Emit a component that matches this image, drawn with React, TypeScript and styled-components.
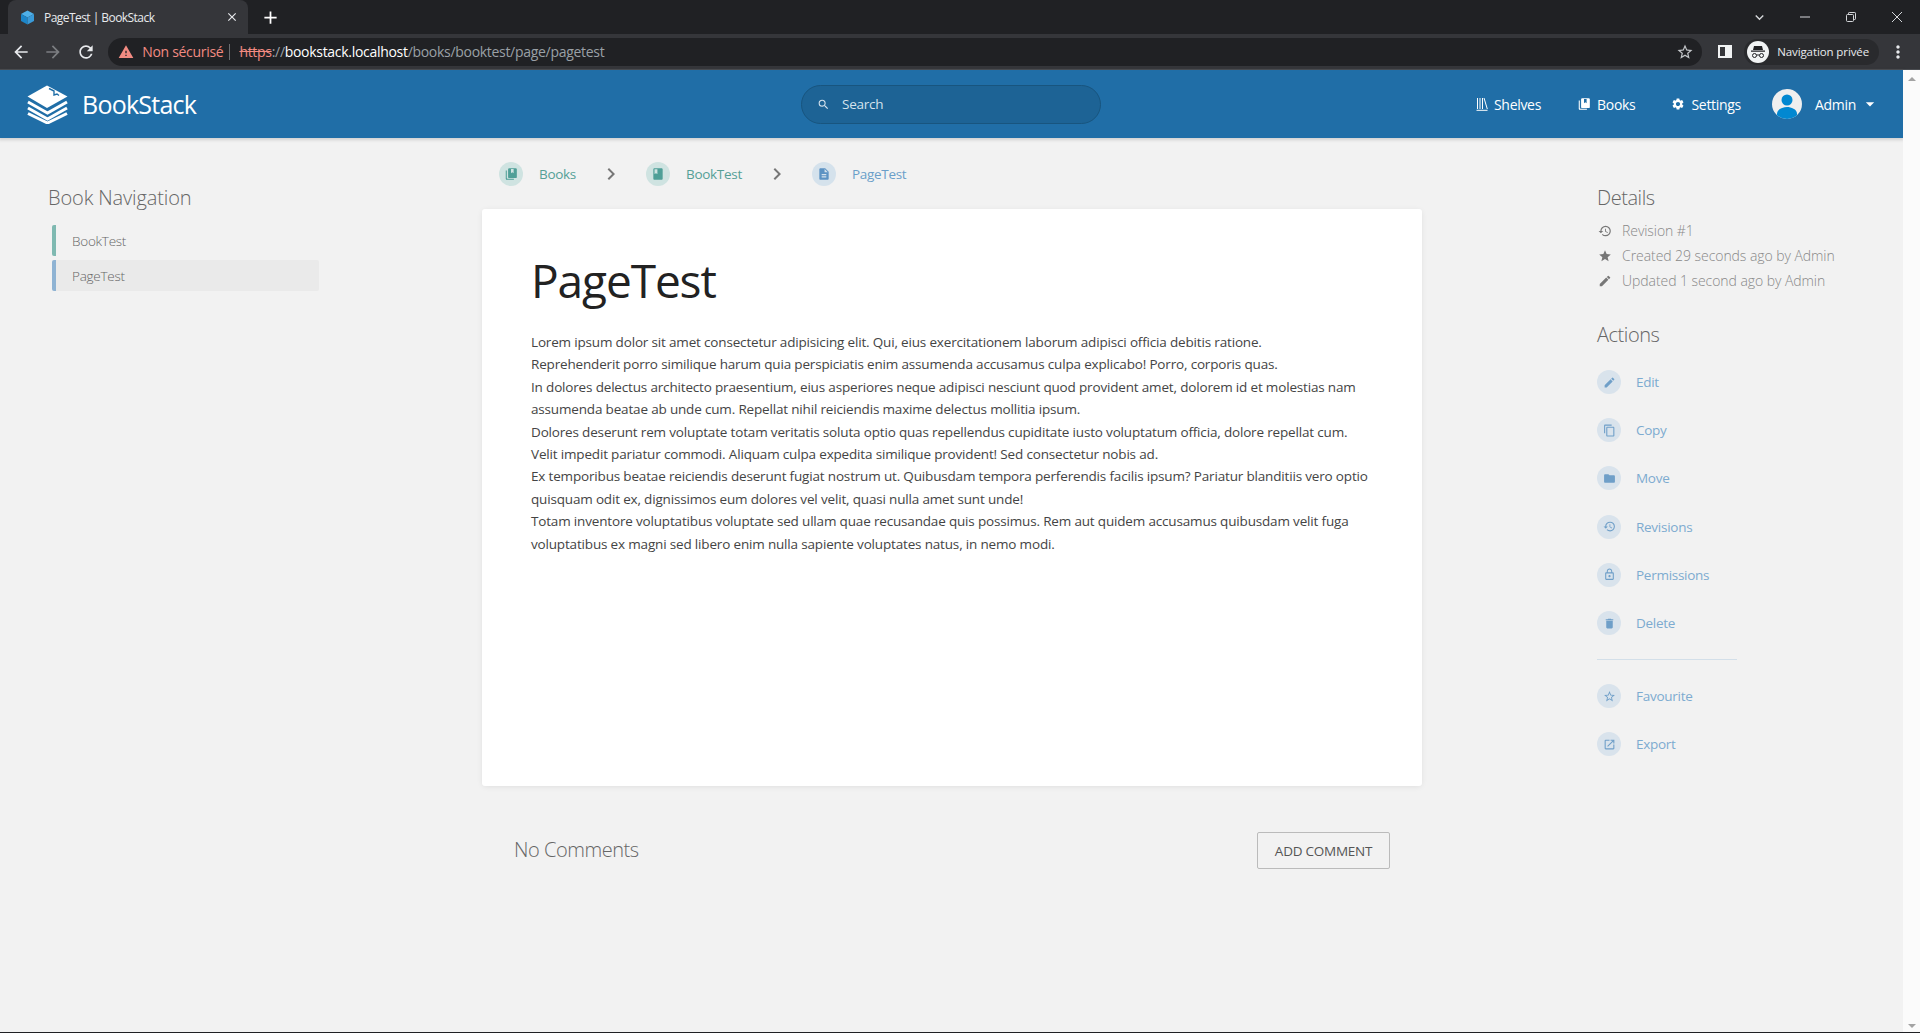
import React from 'react';
import styled, { createGlobalStyle } from 'styled-components';
import {
  MdArrowBack,
  MdArrowForward,
  MdRefresh,
  MdWarning,
  MdStarBorder,
  MdMoreVert,
  MdClose,
  MdAdd,
  MdKeyboardArrowDown,
  MdSearch,
  MdSettings,
  MdArrowDropDown,
  MdChevronRight,
  MdBook,
  MdDescription,
  MdHistory,
  MdStar,
  MdEdit,
  MdContentCopy,
  MdFolder,
  MdLockOutline,
  MdDelete,
  MdOutlineOpenInNew,
} from 'react-icons/md';

const FONT = '"Open Sans", "Noto Sans", "Liberation Sans", sans-serif';

const GlobalStyle = createGlobalStyle`
  html, body {
    margin: 0;
    height: 100%;
    overflow: hidden;
    background: #f2f2f2;
    font-family: ${FONT};
  }
  * { box-sizing: border-box; }
`;

const Window = styled.div`
  width: 1920px;
  height: 1033px;
  display: flex;
  flex-direction: column;
  border-bottom: 1px solid #202124;
`;

/* browser chrome */
const TabStrip = styled.div`
  height: 34px;
  background: #202124;
  display: flex;
  align-items: flex-end;
  padding-left: 8px;
  color: #fff;
`;

const Tab = styled.div`
  width: 240px;
  height: 34px;
  background: #35363a;
  border-radius: 8px 8px 0 0;
  display: flex;
  align-items: center;
  padding: 0 9px 0 12px;
  font-size: 12px;
  letter-spacing: -0.55px;
  color: #e8eaed;
  gap: 9px;
`;

const TabTitle = styled.span`
  flex: 1;
`;

const NewTab = styled.div`
  width: 44px;
  height: 34px;
  display: flex;
  align-items: center;
  justify-content: center;
  font-size: 21px;
`;

const WindowControls = styled.div`
  margin-left: auto;
  height: 34px;
  display: flex;
  align-items: center;
  color: #d5d7da;
`;

const WindowButton = styled.div`
  width: 46px;
  height: 28px;
  display: flex;
  align-items: center;
  justify-content: center;
`;

const Toolbar = styled.div`
  height: 36px;
  background: #35363a;
  display: flex;
  align-items: center;
  padding: 0 0 0 11px;
  color: #e8eaed;
  border-bottom: 1px solid #4a4c50;
`;

const NavArrow = styled.div<{ $dim?: boolean }>`
  width: 32.4px;
  height: 28px;
  display: flex;
  align-items: center;
  justify-content: flex-start;
  font-size: 20px;
  color: ${(p) => (p.$dim ? '#7c7e82' : '#e8eaed')};
`;

const AddressBar = styled.div`
  width: 1594px;
  height: 28px;
  border-radius: 14px;
  background: #202124;
  display: flex;
  align-items: center;
  padding: 0 8px 0 10px;
  font-size: 14px;
  letter-spacing: -0.3px;
`;

const NotSecure = styled.span`
  display: flex;
  align-items: center;
  gap: 8px;
  color: #f28b82;
  padding-right: 6px;
  border-right: 1px solid #6b6d70;
  margin-right: 9px;
  line-height: 16px;
`;

const Scheme = styled.span`
  color: #f28b82;
  text-decoration: line-through;
`;

const UrlMuted = styled.span`
  color: #9aa0a6;
`;

const UrlHost = styled.span`
  color: #fff;
`;

const BarStar = styled.div`
  margin-left: auto;
  display: flex;
  font-size: 18px;
  color: #c4c7ca;
`;

const SidePanel = styled.div`
  width: 14px;
  height: 13px;
  margin: 0 12px 0 16px;
  border: 2px solid #f1f3f4;
  border-right-width: 7px;
`;

const Incognito = styled.div`
  display: flex;
  align-items: center;
  gap: 8px;
  height: 26px;
  width: 135px;
  border-radius: 13px;
  background: #292a2d;
  padding-left: 3px;
  font-size: 11.5px;
  letter-spacing: -0.1px;
  color: #e8eaed;
`;

const IncognitoBadge = styled.div`
  width: 22px;
  height: 22px;
  border-radius: 50%;
  background: #f1f3f4;
  display: flex;
  align-items: center;
  justify-content: center;
`;

const MoreButton = styled.div`
  display: flex;
  font-size: 20px;
  margin-left: 9px;
`;

/* page */
const Viewport = styled.div`
  flex: 1;
  display: flex;
  min-height: 0;
`;

const Page = styled.div`
  flex: 1;
  display: flex;
  flex-direction: column;
`;

const Scrollbar = styled.div`
  width: 17px;
  display: flex;
  flex-direction: column;
  justify-content: space-between;
  align-items: center;
  padding: 7px 0 4px;
  background: #fbfbfb;
`;

const ScrollArrow = styled.div<{ $down?: boolean }>`
  width: 0;
  height: 0;
  border-left: 4px solid transparent;
  border-right: 4px solid transparent;
  ${(p) =>
    p.$down
      ? 'border-top: 4px solid #a3a3a3;'
      : 'border-bottom: 4px solid #a3a3a3;'}
`;

const Header = styled.header`
  height: 68px;
  background: #206ea7;
  color: #fff;
  display: grid;
  grid-template-columns: 1fr 300px 1fr;
  align-items: center;
  padding: 0 28px 0 27px;
  box-shadow: 0 1px 3px 1px rgba(76, 76, 76, 0.2);
`;

const Brand = styled.div`
  display: flex;
  align-items: center;
  gap: 14px;
  font-size: 25px;
  letter-spacing: -0.75px;
`;

const SearchBox = styled.div`
  height: 39px;
  border-radius: 20px;
  background: #1d6395;
  border: 1px solid #18557f;
  display: flex;
  align-items: center;
  gap: 12px;
  padding-left: 15px;
  font-size: 13.5px;
  letter-spacing: -0.25px;
  color: #d4e2ed;
`;

const SearchIcon = styled(MdSearch)`
  font-size: 13px;
`;

const Links = styled.nav`
  display: flex;
  justify-content: flex-end;
  align-items: center;
  font-size: 14px;
  letter-spacing: -0.3px;
`;

const NavLink = styled.a`
  display: flex;
  align-items: center;
  gap: 6px;
  margin-left: 36px;
`;

const Avatar = styled.div`
  width: 30px;
  height: 30px;
  margin-left: 31px;
  border-radius: 50%;
  background: #efefef;
  overflow: hidden;
`;

const UserName = styled.span`
  margin-left: 13px;
`;

const Caret = styled(MdArrowDropDown)`
  font-size: 20px;
  margin: 0 -5px 0 4px;
`;

const Columns = styled.main`
  flex: 1;
  display: grid;
  grid-template-columns: 482px 940px 1fr;
`;

const LeftColumn = styled.aside`
  padding: 46px 0 0 48px;
`;

const CenterColumn = styled.div`
  display: flex;
  flex-direction: column;
`;

const RightColumn = styled.aside`
  padding: 46px 0 0 175px;
`;

const SideTitle = styled.h5`
  margin: 0;
  font-size: 20px;
  line-height: 27px;
  font-weight: 300;
  letter-spacing: -0.45px;
  color: #666;
`;

const BookNavTitle = styled(SideTitle)`
  letter-spacing: -0.12px;
`;

const BookNav = styled.ul`
  list-style: none;
  margin: 14px 0 0 4px;
  padding: 0;
  display: flex;
  flex-direction: column;
  gap: 4px;
  width: 267px;
`;

const BookNavItem = styled.li<{ $accent: string; $active?: boolean }>`
  height: 31px;
  display: flex;
  align-items: center;
  padding-left: 16px;
  border-left: 4px solid ${(p) => p.$accent};
  border-radius: 2px;
  background: ${(p) => (p.$active ? '#eaeaea' : 'transparent')};
  font-size: 13.5px;
  font-weight: 300;
  letter-spacing: -0.25px;
  color: #666;
`;

const Breadcrumbs = styled.div`
  height: 71px;
  display: flex;
  align-items: center;
  padding-left: 17px;
`;

const Crumb = styled.a<{ $color: string }>`
  display: flex;
  align-items: center;
  gap: 16px;
  font-size: 13.5px;
  letter-spacing: -0.3px;
  color: ${(p) => p.$color};
`;

const CrumbIcon = styled.span<{ $color: string; $bg: string }>`
  width: 24px;
  height: 24px;
  border-radius: 50%;
  display: flex;
  align-items: center;
  justify-content: center;
  font-size: 14px;
  color: ${(p) => p.$color};
  background: ${(p) => p.$bg};
`;

const CrumbSep = styled(MdChevronRight)`
  font-size: 24px;
  color: #777;
  margin: 0 23px;
`;

const Card = styled.article`
  height: 577px;
  background: #fff;
  border-radius: 3px;
  box-shadow: 0 1px 6px -1px rgba(0, 0, 0, 0.1);
  padding: 43px 50px 0 49px;
`;

const PageTitle = styled.h1`
  margin: 0;
  font-size: 46px;
  line-height: 56px;
  font-weight: 400;
  letter-spacing: -1.1px;
  color: #222;
`;

const BodyText = styled.p`
  margin: 23px 0 0;
  font-size: 13.5px;
  line-height: 22.4px;
  letter-spacing: -0.17px;
  color: #444;
  white-space: nowrap;
`;

const Comments = styled.section`
  display: flex;
  justify-content: space-between;
  align-items: flex-start;
  margin-top: 46px;
  padding: 0 32px;
`;

const CommentsTitle = styled.h5`
  margin: 4px 0 0;
  font-size: 20px;
  line-height: 27px;
  font-weight: 300;
  letter-spacing: -0.45px;
  color: #666;
`;

const OutlineButton = styled.button`
  width: 133px;
  height: 37px;
  border: 1px solid #bbb;
  border-radius: 2px;
  background: transparent;
  font-family: ${FONT};
  font-size: 13.5px;
  letter-spacing: -0.25px;
  color: #555;
  padding: 0;
`;

const EntityMeta = styled.div`
  margin-top: 7px;
  display: flex;
  flex-direction: column;
`;

const MetaRow = styled.div`
  height: 25px;
  display: flex;
  align-items: center;
  gap: 10px;
  font-size: 14px;
  font-weight: 300;
  letter-spacing: -0.06px;
  color: #888;
`;

const MetaIcon = styled.span`
  width: 15px;
  display: flex;
  justify-content: center;
  font-size: 14px;
  color: #777;
`;

const ActionsTitle = styled(SideTitle)`
  margin-top: 28px;
`;

const ActionList = styled.div`
  margin-top: 10px;
  display: flex;
  flex-direction: column;
`;

const Action = styled.a`
  height: 48.2px;
  display: flex;
  align-items: center;
  gap: 15px;
  font-size: 13.5px;
  letter-spacing: -0.27px;
  color: #7dabd0;
`;

const ActionIcon = styled.span`
  width: 24px;
  height: 24px;
  border-radius: 50%;
  background: #d9e3ec;
  display: flex;
  align-items: center;
  justify-content: center;
  font-size: 13px;
  color: #6f9fc8;
`;

const Divider = styled.hr`
  width: 140px;
  height: 1px;
  border: 0;
  margin: 12px 0 12px;
  background: #d3dfe9;
`;

const Logo = () => (
  <svg width="41" height="39" viewBox="0 0 41 39" fill="none">
    <path d="M20 0.5 40.5 11.500 20 23 0.5 11.500Z" fill="#fff" />
    <path d="M22 3.500 27 6v4l3-1 2 1.500" stroke="#206ea7" strokeWidth="1.4" />
    <path
      d="M1 17l19.500 11L40 17M1 23l19.500 11L40 23M1 28.500l19.500 9.500L40 28.500"
      stroke="#fff"
      strokeWidth="3"
    />
  </svg>
);

const BooksGlyph = ({ size = 14 }: { size?: number }) => (
  <svg width={size} height={size} viewBox="0 0 24 24" fill="currentColor">
    <path d="M9 2h11a2 2 0 0 1 2 2v13a2 2 0 0 1-2 2H9a2 2 0 0 1-2-2V4a2 2 0 0 1 2-2zm3 1.500v7l2.200-1.400 2.300 1.400v-7z" />
    <path d="M3 6v14a2 2 0 0 0 2 2h12v-1.800H6a1.200 1.200 0 0 1-1.200-1.200V6z" />
  </svg>
);

const ShelvesGlyph = () => (
  <svg width="12" height="14" viewBox="0 0 12 14" fill="none" stroke="currentColor">
    <path d="M1.500 1v11M4 1v11M6.500 1v11M8 1l3.300 11M0.500 13.300h11" strokeWidth="1" />
  </svg>
);

const UserGlyph = () => (
  <svg width="30" height="30" viewBox="0 0 30 30" fill="#0288d1">
    <circle cx="15" cy="11" r="5.500" />
    <path d="M5 25c0-5 6-7 10-7s10 2 10 7v5H5z" />
  </svg>
);

const Favicon = () => (
  <svg width="15" height="15" viewBox="0 0 15 15">
    <path d="M7.500 0.500 14 4 7.500 7.500 1 4Z" fill="#4fb0e8" />
    <path d="M1 4v7l6.500 3.500v-7z" fill="#1c86c9" />
    <path d="M14 4v7l-6.500 3.500v-7z" fill="#3a9ad8" />
  </svg>
);

const IncognitoGlyph = () => (
  <svg width="16" height="14" viewBox="0 0 16 14" fill="#202124">
    <path d="M4 1h8l1 4H3zM1 5.500h14V6.700H1z" />
    <path
      d="M6.500 10.500a2 2 0 1 1-4 0 2 2 0 0 1 4 0zM13.500 10.500a2 2 0 1 1-4 0 2 2 0 0 1 4 0zM6.500 10h3"
      fill="none"
      stroke="#202124"
    />
  </svg>
);

const MinimizeGlyph = () => (
  <svg width="10" height="10" viewBox="0 0 10 10" stroke="currentColor">
    <path d="M0 5h10" />
  </svg>
);

const RestoreGlyph = () => (
  <svg width="10" height="10" viewBox="0 0 10 10" fill="none" stroke="currentColor">
    <path d="M2.500 2.500V1.200q0-.7.700-.7h5.600q.7 0 .7.700v5.600q0 .7-.7.700H7.500" />
    <rect x="0.500" y="2.500" width="7" height="7" rx="1" />
  </svg>
);

const CloseGlyph = () => (
  <svg width="10" height="10" viewBox="0 0 10 10" stroke="currentColor">
    <path d="M0 0l10 10M10 0L0 10" />
  </svg>
);

const GREEN = { color: '#4f9f97', bg: '#cfe3e1', text: '#55a097' };
const BLUE = { color: '#5d93c3', bg: '#d5e2ec', text: '#6b9fc9' };

const LINES = [
  'Lorem ipsum dolor sit amet consectetur adipisicing elit. Qui, eius exercitationem laborum adipisci officia debitis ratione.',
  'Reprehenderit porro similique harum quia perspiciatis enim assumenda accusamus culpa explicabo! Porro, corporis quas.',
  'In dolores delectus architecto praesentium, eius asperiores neque adipisci nesciunt quod provident amet, dolorem id et molestias nam',
  'assumenda beatae ab unde cum. Repellat nihil reiciendis maxime delectus mollitia ipsum.',
  'Dolores deserunt rem voluptate totam veritatis soluta optio quas repellendus cupiditate iusto voluptatum officia, dolore repellat cum.',
  'Velit impedit pariatur commodi. Aliquam culpa expedita similique provident! Sed consectetur nobis ad.',
  'Ex temporibus beatae reiciendis deserunt fugiat nostrum ut. Quibusdam tempora perferendis facilis ipsum? Pariatur blanditiis vero optio',
  'quisquam odit ex, dignissimos eum dolores vel velit, quasi nulla amet sunt unde!',
  'Totam inventore voluptatibus voluptate sed ullam quae recusandae quis possimus. Rem aut quidem accusamus quibusdam velit fuga',
  'voluptatibus ex magni sed libero enim nulla sapiente voluptates natus, in nemo modi.',
];

const PRIMARY_ACTIONS = [
  { label: 'Edit', icon: <MdEdit /> },
  { label: 'Copy', icon: <MdContentCopy /> },
  { label: 'Move', icon: <MdFolder /> },
  { label: 'Revisions', icon: <MdHistory /> },
  { label: 'Permissions', icon: <MdLockOutline /> },
  { label: 'Delete', icon: <MdDelete /> },
];

const SECONDARY_ACTIONS = [
  { label: 'Favourite', icon: <MdStarBorder /> },
  { label: 'Export', icon: <MdOutlineOpenInNew /> },
];

const META = [
  { label: 'Revision #1', icon: <MdHistory /> },
  { label: 'Created 29 seconds ago by Admin', icon: <MdStar /> },
  { label: 'Updated 1 second ago by Admin', icon: <MdEdit /> },
];

export default function App() {
  return (
    <Window>
      <GlobalStyle />
      <TabStrip>
        <Tab>
          <Favicon />
          <TabTitle>PageTest | BookStack</TabTitle>
          <MdClose size={14} />
        </Tab>
        <NewTab>
          <MdAdd />
        </NewTab>
        <WindowControls>
          <WindowButton>
            <MdKeyboardArrowDown size={17} />
          </WindowButton>
          <WindowButton>
            <MinimizeGlyph />
          </WindowButton>
          <WindowButton>
            <RestoreGlyph />
          </WindowButton>
          <WindowButton>
            <CloseGlyph />
          </WindowButton>
        </WindowControls>
      </TabStrip>
      <Toolbar>
        <NavArrow>
          <MdArrowBack />
        </NavArrow>
        <NavArrow $dim>
          <MdArrowForward />
        </NavArrow>
        <NavArrow>
          <MdRefresh />
        </NavArrow>
        <AddressBar>
          <NotSecure>
            <MdWarning size={16} />
            Non sécurisé
          </NotSecure>
          <Scheme>https</Scheme>
          <UrlMuted>://</UrlMuted>
          <UrlHost>bookstack.localhost</UrlHost>
          <UrlMuted>/books/booktest/page/pagetest</UrlMuted>
          <BarStar>
            <MdStarBorder />
          </BarStar>
        </AddressBar>
        <SidePanel />
        <Incognito>
          <IncognitoBadge>
            <IncognitoGlyph />
          </IncognitoBadge>
          Navigation privée
        </Incognito>
        <MoreButton>
          <MdMoreVert />
        </MoreButton>
      </Toolbar>
      <Viewport>
        <Page>
          <Header>
            <Brand>
              <Logo />
              BookStack
            </Brand>
            <SearchBox>
              <SearchIcon />
              Search
            </SearchBox>
            <Links>
              <NavLink>
                <ShelvesGlyph />
                Shelves
              </NavLink>
              <NavLink>
                <BooksGlyph />
                Books
              </NavLink>
              <NavLink>
                <MdSettings size={14} />
                Settings
              </NavLink>
              <Avatar>
                <UserGlyph />
              </Avatar>
              <UserName>Admin</UserName>
              <Caret />
            </Links>
          </Header>
          <Columns>
            <LeftColumn>
              <BookNavTitle>Book Navigation</BookNavTitle>
              <BookNav>
                <BookNavItem $accent="#7fb9b1">BookTest</BookNavItem>
                <BookNavItem $accent="#8fb3d3" $active>
                  PageTest
                </BookNavItem>
              </BookNav>
            </LeftColumn>
            <CenterColumn>
              <Breadcrumbs>
                <Crumb $color={GREEN.text}>
                  <CrumbIcon $color={GREEN.color} $bg={GREEN.bg}>
                    <BooksGlyph />
                  </CrumbIcon>
                  Books
                </Crumb>
                <CrumbSep />
                <Crumb $color={GREEN.text}>
                  <CrumbIcon $color={GREEN.color} $bg={GREEN.bg}>
                    <MdBook />
                  </CrumbIcon>
                  BookTest
                </Crumb>
                <CrumbSep />
                <Crumb $color={BLUE.text}>
                  <CrumbIcon $color={BLUE.color} $bg={BLUE.bg}>
                    <MdDescription />
                  </CrumbIcon>
                  PageTest
                </Crumb>
              </Breadcrumbs>
              <Card>
                <PageTitle>PageTest</PageTitle>
                <BodyText>
                  {LINES.map((line) => (
                    <React.Fragment key={line}>
                      {line}
                      <br />
                    </React.Fragment>
                  ))}
                </BodyText>
              </Card>
              <Comments>
                <CommentsTitle>No Comments</CommentsTitle>
                <OutlineButton>ADD COMMENT</OutlineButton>
              </Comments>
            </CenterColumn>
            <RightColumn>
              <SideTitle>Details</SideTitle>
              <EntityMeta>
                {META.map((m) => (
                  <MetaRow key={m.label}>
                    <MetaIcon>{m.icon}</MetaIcon>
                    {m.label}
                  </MetaRow>
                ))}
              </EntityMeta>
              <ActionsTitle>Actions</ActionsTitle>
              <ActionList>
                {PRIMARY_ACTIONS.map((a) => (
                  <Action key={a.label}>
                    <ActionIcon>{a.icon}</ActionIcon>
                    {a.label}
                  </Action>
                ))}
                <Divider />
                {SECONDARY_ACTIONS.map((a) => (
                  <Action key={a.label}>
                    <ActionIcon>{a.icon}</ActionIcon>
                    {a.label}
                  </Action>
                ))}
              </ActionList>
            </RightColumn>
          </Columns>
        </Page>
        <Scrollbar>
          <ScrollArrow />
          <ScrollArrow $down />
        </Scrollbar>
      </Viewport>
    </Window>
  );
}
